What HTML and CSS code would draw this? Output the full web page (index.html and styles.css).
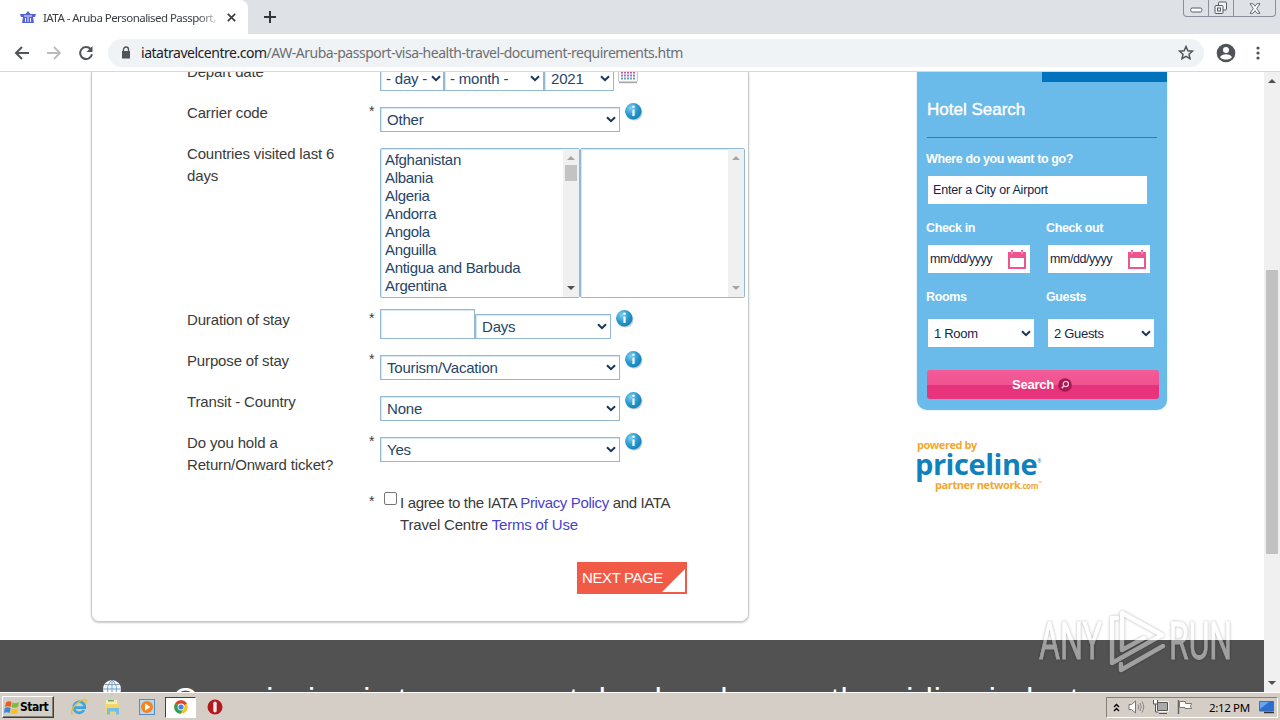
FILE: index.html
```
<!DOCTYPE html>
<html lang="en">
<head>
  <meta charset="utf-8">
  <title>IATA - Aruba Personalised Passport, Visa &amp; Health Requirements</title>
  <link rel="stylesheet" href="styles.css">
</head>
<body>
  <svg class="symbols" width="0" height="0">
    <defs>
      <radialGradient id="infoFill" cx="35%" cy="30%" r="75%">
        <stop offset="0" stop-color="#7fd0ee"/>
        <stop offset=".55" stop-color="#2a9ad0"/>
        <stop offset="1" stop-color="#0f7fb6"/>
      </radialGradient>
    </defs>
    <symbol id="chevron" viewBox="0 0 10 7"><path d="M1 1.2 5 5.2 9 1.2" fill="none" stroke="currentColor" stroke-width="2"/></symbol>
    <symbol id="info" viewBox="0 0 20 20">
      <circle cx="10.2" cy="10.4" r="8.2" fill="#c2cbd0"/>
      <circle cx="9.3" cy="9.3" r="8.2" fill="url(#infoFill)"/>
      <path d="M9.500 7.500v6.500" fill="none" stroke="#fff" stroke-width="2.200"/>
      <circle cx="9.500" cy="4.800" r="1.300" fill="#fff"/>
    </symbol>
    <symbol id="date" viewBox="0 0 18 19">
      <path d="M1 3h16v15H1z" fill="none" stroke="#ee5490" stroke-width="2"/>
      <path d="M0 2h18v6H0zM3 0h2v3H3zM13 0h2v3h-2z" fill="#ee5490"/>
      <path d="M4 1v3M14 1v3" stroke="#f9bdd4" stroke-width="1"/>
    </symbol>
  </svg>

  <div class="tabstrip">
    <div class="tab">
      <svg class="favicon" width="16" height="12" viewBox="0 0 16 12">
        <path d="M0 3h5.500L8 0l2.500 3H16l-1 3h-2l1 6H2l1-6H1z" fill="#5560dc"/>
        <path d="M4 5h8M5.500 7v4M8 6v5M10.500 7v4" stroke="#fff" stroke-width=".9"/>
      </svg>
      <span class="tab-title">IATA - Aruba Personalised Passport,</span>
      <svg class="tab-close" width="9" height="9" viewBox="0 0 9 9"><path d="M.8.8l7.4 7.4M8.2.8.8 8.2" stroke="#3c4043" stroke-width="1.7"/></svg>
    </div>
    <svg class="new-tab" width="12" height="12" viewBox="0 0 12 12"><path d="M6 0v12M0 6h12" stroke="#333639" stroke-width="2"/></svg>
    <div class="window-buttons">
      <div class="wb"><svg width="13" height="6" viewBox="0 0 13 6"><rect x=".8" y="1" width="11" height="4" rx="1.5" fill="#fff" stroke="#555c68"/></svg></div>
      <div class="wb"><svg width="14" height="14" viewBox="0 0 14 14"><g fill="#f4f5f7" stroke="#555c68"><rect x="4.500" y="1" width="8" height="8" rx="1"/><rect x="1" y="4.500" width="8" height="8" rx="1"/><rect x="3.500" y="7" width="3" height="3"/></g></svg></div>
      <div class="wb wide"><svg width="12" height="11" viewBox="0 0 12 11"><path d="M1 .7h3l2 2.500 2-2.500h3L7.700 5.500 11 10.300H8L6 7.700l-2 2.600H1l3.300-4.800z" fill="#fff" stroke="#555c68" stroke-width=".9"/></svg></div>
    </div>
  </div>

  <div class="toolbar">
    <svg width="16" height="14" viewBox="0 0 16 14"><path d="M15 7H2M8 1 2 7l6 6" fill="none" stroke="#505357" stroke-width="2"/></svg>
    <svg width="16" height="14" viewBox="0 0 16 14"><path d="M1 7h13M8 1l6 6-6 6" fill="none" stroke="#b9bbbd" stroke-width="1.800"/></svg>
    <svg width="16" height="16" viewBox="0 0 16 16"><path d="M12.600 4A6 6 0 1 0 14 9.300" fill="none" stroke="#505357" stroke-width="2"/><path d="M14.500 1v6h-6z" fill="#505357"/></svg>
    <div class="omnibox">
      <svg width="10" height="13" viewBox="0 0 10 13"><path d="M1 5h8v7.500H1z" fill="#505357"/><path d="M2.500 5.500V3.500a2.500 2.500 0 0 1 5 0v2" fill="none" stroke="#505357" stroke-width="1.400"/></svg>
      <span class="url"><b>iatatravelcentre.com</b>/AW-Aruba-passport-visa-health-travel-document-requirements.htm</span>
      <svg width="16" height="15" viewBox="0 0 16 15"><path d="M8 1.500l1.900 4.200 4.500.5-3.400 3 1 4.500L8 11.400l-4 2.300 1-4.500-3.400-3 4.500-.5z" fill="none" stroke="#505357" stroke-width="1.500"/></svg>
    </div>
    <svg width="20" height="20" viewBox="0 0 20 20"><circle cx="10" cy="10" r="9.300" fill="#505357"/><circle cx="10" cy="7" r="3" fill="#fff"/><path d="M4 14.200c1.500-4 10.500-4 12 0-2.500 3.200-9.500 3.200-12 0z" fill="#fff"/></svg>
    <svg class="menu-dots" width="4" height="14" viewBox="0 0 4 14" fill="#505357"><circle cx="2" cy="2" r="1.600"/><circle cx="2" cy="7" r="1.600"/><circle cx="2" cy="12" r="1.600"/></svg>
  </div>

  <div class="viewport">
    <div class="page">
      <div class="columns">
        <div class="form-card">
          <div class="row">
            <div class="label">Depart date</div><div class="req"></div>
            <div class="field">
              <div class="select day">- day -<svg><use href="#chevron"/></svg></div>
              <div class="select month">- month -<svg><use href="#chevron"/></svg></div>
              <div class="select year">2021<svg><use href="#chevron"/></svg></div>
              <svg class="cal" width="20" height="21" viewBox="0 0 20 21">
                <rect x=".5" y=".5" width="19" height="18.500" rx="2" fill="#fafafa" stroke="#c9c9c9"/>
                <path d="M1 19.500h18" stroke="#a9a9a9" stroke-width="1.500"/>
                <path d="M3 9.500h14" stroke="#c45aa6" stroke-width="2" stroke-dasharray="2 1"/>
                <path d="M3 12.500h14" stroke="#8f80c4" stroke-width="2" stroke-dasharray="2 1"/>
                <path d="M3 15.500h14" stroke="#6b9db8" stroke-width="2" stroke-dasharray="2 1"/>
              </svg>
            </div>
          </div>
          <div class="row">
            <div class="label">Carrier code</div><div class="req">*</div>
            <div class="field"><div class="select">Other<svg><use href="#chevron"/></svg></div><svg class="info"><use href="#info"/></svg></div>
          </div>
          <div class="row countries">
            <div class="label">Countries visited last 6 days</div><div class="req"></div>
            <div class="field">
              <div class="list">
                <ul>
                  <li>Afghanistan</li>
                  <li>Albania</li>
                  <li>Algeria</li>
                  <li>Andorra</li>
                  <li>Angola</li>
                  <li>Anguilla</li>
                  <li>Antigua and Barbuda</li>
                  <li>Argentina</li>
                </ul>
                <div class="list-scroll"><i class="up"></i><div class="list-thumb"></div><i class="down dark"></i></div>
              </div>
              <div class="list chosen">
                <ul></ul>
                <div class="list-scroll"><i class="up"></i><i class="down"></i></div>
              </div>
            </div>
          </div>
          <div class="row">
            <div class="label">Duration of stay</div><div class="req">*</div>
            <div class="field"><div class="input"></div><div class="select unit">Days<svg><use href="#chevron"/></svg></div><svg class="info"><use href="#info"/></svg></div>
          </div>
          <div class="row">
            <div class="label">Purpose of stay</div><div class="req">*</div>
            <div class="field"><div class="select">Tourism/Vacation<svg><use href="#chevron"/></svg></div><svg class="info"><use href="#info"/></svg></div>
          </div>
          <div class="row">
            <div class="label">Transit - Country</div><div class="req"></div>
            <div class="field"><div class="select">None<svg><use href="#chevron"/></svg></div><svg class="info"><use href="#info"/></svg></div>
          </div>
          <div class="row ticket">
            <div class="label">Do you hold a Return/Onward ticket?</div><div class="req">*</div>
            <div class="field"><div class="select">Yes<svg><use href="#chevron"/></svg></div><svg class="info"><use href="#info"/></svg></div>
          </div>
          <div class="row agree">
            <div class="label"></div><div class="req">*</div>
            <div class="field">
              <span class="checkbox"></span>
              <div class="terms">
                <p class="tight">I agree to the IATA <a>Privacy Policy</a> and IATA</p>
                <p>Travel Centre <a>Terms of Use</a></p>
              </div>
            </div>
          </div>
          <div class="next">NEXT PAGE<svg width="23" height="23" viewBox="0 0 23 23"><path d="M23 0v23H0z" fill="#fff"/></svg></div>
        </div>

        <div class="sidebar">
          <div class="hotel">
            <div class="hotel-tab"></div>
            <h2>Hotel Search</h2>
            <div class="caption">Where do you want to go?</div>
            <div class="box city">Enter a City or Airport</div>
            <div class="pair">
              <div>
                <div class="caption">Check in</div>
                <div class="box when">mm/dd/yyyy<svg width="18" height="19"><use href="#date"/></svg></div>
              </div>
              <div>
                <div class="caption">Check out</div>
                <div class="box when">mm/dd/yyyy<svg width="18" height="19"><use href="#date"/></svg></div>
              </div>
            </div>
            <div class="pair second">
              <div>
                <div class="caption">Rooms</div>
                <div class="box pick">1 Room<svg><use href="#chevron"/></svg></div>
              </div>
              <div>
                <div class="caption">Guests</div>
                <div class="box pick">2 Guests<svg><use href="#chevron"/></svg></div>
              </div>
            </div>
            <div class="search">Search
              <svg width="14" height="14" viewBox="0 0 14 14"><circle cx="7" cy="7" r="6.800" fill="#a8174f"/><circle cx="7.800" cy="6" r="2.600" fill="none" stroke="#fbc6da" stroke-width="1.300"/><path d="M5.900 8 3.700 10.300" stroke="#fbc6da" stroke-width="1.500"/></svg>
            </div>
          </div>
          <div class="priceline">
            <div class="powered">powered by</div>
            <div class="brand">priceline<sup>®</sup></div>
            <div class="partner">partner network<small>.com</small><sup>™</sup></div>
          </div>
        </div>
      </div>

      <div class="footer">
        <svg width="18" height="18" viewBox="0 0 18 18"><circle cx="9" cy="9" r="9" fill="#f4f8fb"/><path d="M9 0v18M0 9h18M2 4.500h14M2 13.500h14M9 0C3 5 3 13 9 18M9 0c6 5 6 13 0 18" fill="none" stroke="#7d9fc2"/></svg>
        <span class="mission">Our mission is to represent, lead and serve the airline industry</span>
      </div>
    </div>
    <div class="scrollbar"><i class="up"></i><div class="thumb"></div><i class="down"></i></div>
  </div>

  <div class="taskbar">
    <div class="start">
      <svg width="16" height="15" viewBox="0 0 16 15"><path d="M2 2.500q3-2 5.500-.5L6.700 7Q4 5.500 1 7z" fill="#ee5b23"/><path d="M8.500 2.500q3 1.500 6.500-.5l-1 5Q11 8.500 7.700 7.300z" fill="#7cbb3b"/><path d="M.8 8q3-1.500 5.800 0l-.9 5Q3 11.500 0 13z" fill="#3a87d8"/><path d="M7.600 8.500q3 1.300 6.300-.3l-1 5q-3 1.500-6.200 0z" fill="#fbc21f"/></svg>
      Start
    </div>
    <div class="quick">
      <svg width="18" height="18" viewBox="0 0 18 18"><path d="M14 12.200A5.600 5.600 0 1 1 14.800 9.600H5" fill="none" stroke="#3ba5e3" stroke-width="2.600"/><path d="M2.500 16.500C-1 14 6 3 14.500 1.500c2.500 0 2 2.500 1 4.200" fill="none" stroke="#e8bd3a" stroke-width="1.400"/></svg>
      <svg width="18" height="18" viewBox="0 0 18 18"><path d="M1 3h5l1 2h9v10H1z" fill="#f2d66b"/><path d="M2 2h11v4H2z" fill="#f8eeb4"/><path d="M4 2h6v1.500H4z" fill="#62b65b"/><path d="M3 16.500V10h12v6.500h-3v-3H6v3z" fill="#74bde8"/></svg>
      <svg width="18" height="18" viewBox="0 0 18 18"><rect x="1.500" y="1.500" width="15" height="15" fill="#b8d8f2" stroke="#4f8ec9"/><circle cx="9" cy="9" r="6" fill="#f5831f"/><path d="M7 5.500 12.500 9 7 12.500z" fill="#fff"/></svg>
      <div class="active"><svg width="14" height="14" viewBox="0 0 14 14"><circle cx="7" cy="7" r="6.800" fill="#f3c52e"/><path d="M7 7 1.100 3.600A6.800 6.800 0 0 1 12.900 3.600z" fill="#da4437"/><path d="M7 7 1.100 3.600A6.800 6.800 0 0 0 6.600 13.800L9.500 8.500z" fill="#2f9e58"/><circle cx="7" cy="7" r="3.400" fill="#fff"/><circle cx="7" cy="7" r="2.600" fill="#4a80e8"/></svg></div>
      <svg width="16" height="16" viewBox="0 0 16 16"><circle cx="8" cy="8" r="7.500" fill="#b3191c"/><rect x="6.300" y="2.500" width="3.400" height="11" rx="1.700" fill="#f7e9e9"/></svg>
    </div>
    <div class="tray">
      <svg width="7" height="9" viewBox="0 0 7 9"><path d="M1 4l2.500-2.500L6 4M1 8l2.500-2.500L6 8" fill="none" stroke="#000" stroke-width="1.400"/></svg>
      <svg class="sound" width="17" height="14" viewBox="0 0 17 14"><path d="M1 4.500h2.500L7.500 1v12l-4-3.500H1z" fill="#fff" stroke="#777"/><path d="M10 4.500q1.500 2.500 0 5M12 3q2.500 4 0 8M14 1.500q3.500 5.500 0 11" fill="none" stroke="#888"/></svg>
      <svg class="net" width="17" height="16" viewBox="0 0 17 16"><path d="M5.500 3.500h10v8h-10z" fill="#aaa" stroke="#fff" stroke-width="2.500"/><path d="M5.500 3.500h10v8h-10z" fill="#aaa" stroke="#555"/><path d="M1 1h5v4H1z" fill="#fff"/><path d="M7 14.500h8M1.500 1v4h4V1M3.500 5v8h3" fill="none" stroke="#555"/></svg>
      <svg class="flag" width="17" height="16" viewBox="0 0 17 16"><path d="M2.500 1v14" stroke="#666" stroke-width="1.500"/><path d="M3.500 2.500h6v2h6q-2 3 0 5H9v-1H3.500z" fill="#fff" stroke="#777"/></svg>
      <span class="clock">2:12 PM</span>
      <svg class="desk" width="15" height="13" viewBox="0 0 15 13"><path d="M.5.500h14v9.500H.500z" fill="#2b6ed0" stroke="#3a71b8"/><path d="M1 1h9L1 8z" fill="#6ba5ec"/><path d="M5 11.500h10" stroke="#333" stroke-width="1.500"/></svg>
    </div>
  </div>

  <svg class="watermark" width="200" height="66" viewBox="0 0 200 66">
    <g class="mark">
      <text x="1" y="50" textLength="63" lengthAdjust="spacingAndGlyphs">ANY</text>
      <text x="131" y="50" textLength="63" lengthAdjust="spacingAndGlyphs">RUN</text>
      <path d="M79 9h-5v45L124 26 84 4v37l22-12M83 55v6L125 37"/>
    </g>
  </svg>
</body>
</html>
```
FILE: styles.css
```
* {
  box-sizing: border-box;
}
body {
  margin: 0;
  width: 1280px;
  height: 720px;
  overflow: hidden;
  display: flex;
  flex-direction: column;
  background: #fff;
  font-family: "Liberation Sans", Arial, sans-serif;
  color: #3a3a3a;
}
svg {
  display: block;
  flex: none;
}
.symbols {
  position: absolute;
}

/* browser frame */
.tabstrip {
  flex: none;
  height: 34px;
  display: flex;
  background: #dee1e6;
}
.tab {
  width: 248px;
  display: flex;
  align-items: center;
  padding-left: 20px;
  background: #fff;
  border-radius: 0 8px 0 0;
}
.tab-title {
  width: 176px;
  margin-left: 7px;
  overflow: hidden;
  white-space: nowrap;
  font: 11.5px "Noto Sans", sans-serif;
  letter-spacing: -0.54px;
  color: #3c4043;
  -webkit-mask-image: linear-gradient(to right, #000 155px, transparent 180px);
}
.tab-close {
  margin-left: 8px;
}
.new-tab {
  margin: 11px 0 0 16px;
}
.window-buttons {
  display: flex;
  height: 17px;
  margin-left: auto;
  margin-right: 4px;
  border: 1px solid #8b919c;
  border-top: 0;
  border-radius: 0 0 4px 4px;
}
.wb {
  width: 25px;
  display: flex;
  align-items: center;
  justify-content: center;
  border-right: 1px solid #8b919c;
}
.wb:first-child {
  align-items: flex-end;
  padding-bottom: 3px;
}
.wb.wide {
  width: 41px;
  border-right: 0;
}
.toolbar {
  flex: none;
  height: 38px;
  display: flex;
  align-items: center;
  gap: 16px;
  padding: 0 14px;
  border-bottom: 1px solid #d5d9dc;
}
.omnibox {
  width: 1096px;
  height: 28px;
  display: flex;
  align-items: center;
  margin-left: -2px;
  padding: 0 10px 0 13px;
  border-radius: 14px;
  background: #f0f3f5;
}
.url {
  flex: 1;
  margin-left: 10px;
  font: 14px "Noto Sans", sans-serif;
  letter-spacing: -0.48px;
  color: #6b6f73;
}
.url b {
  font-weight: normal;
  color: #202124;
}
.toolbar .menu-dots {
  margin-left: 4px;
}
.omnibox + svg {
  margin-left: -4px;
}

/* page */
.viewport {
  flex: 1;
  min-height: 0;
  display: flex;
}
.page {
  width: 1264px;
  overflow: hidden;
}
.columns {
  height: 568px;
  display: flex;
}
.form-card {
  width: 658px;
  height: 550px;
  margin-left: 91px;
  padding-left: 95px;
  border: 1px solid #c4c8c8;
  border-top: 0;
  border-radius: 0 0 8px 8px;
  box-shadow: 0 1px 2px #ccc;
}
.row {
  height: 41px;
  display: flex;
  font-size: 15px;
  line-height: 22px;
}
.row:first-child {
  margin-top: -11px;
  clip-path: inset(11px 0 0 0);
}
.row.countries {
  height: 166px;
}
.row.ticket {
  height: 60px;
}
.row.agree {
  height: 70px;
}
.label {
  width: 182px;
  padding-right: 20px;
  letter-spacing: -0.15px;
}
.req {
  width: 11px;
  line-height: 18px;
  font-size: 14px;
}
.field {
  display: flex;
  align-items: flex-start;
}
.select {
  width: 240px;
  height: 25px;
  display: flex;
  align-items: center;
  justify-content: space-between;
  margin-top: 5px;
  padding: 0 3px 0 6px;
  border: 1px solid #93b9d2;
  box-shadow: inset 1px 1px 1px #d5e7f3;
  color: #264568;
  letter-spacing: -0.2px;
  white-space: nowrap;
}
.select svg, .pick svg {
  width: 10px;
  height: 7px;
  color: #17365a;
}
.select.day {
  width: 64px;
  padding: 0 2px 0 5px;
}
.select.month {
  width: 100px;
  padding-left: 5px;
}
.select.year {
  width: 70px;
}
.select.unit {
  width: 136px;
}
.input {
  width: 95px;
  height: 30px;
  border: 1px solid #93b9d2;
  box-shadow: inset 1px 1px 1px #d5e7f3;
}
.cal {
  margin: 2px 0 0 4px;
}
.info {
  width: 20px;
  height: 20px;
  margin-left: 4px;
}
.list {
  width: 200px;
  height: 150px;
  display: flex;
  margin-top: 5px;
  border: 1px solid #8fb9d6;
  border-radius: 2px;
  box-shadow: inset 1px 1px 1px #d5e7f3;
}
.list.chosen {
  width: 165px;
}
.list ul {
  flex: 1;
  margin: 0;
  padding: 2px 0 0 4px;
  list-style: none;
  line-height: 18px;
  color: #264568;
  letter-spacing: -0.3px;
  white-space: nowrap;
}
.list-scroll, .scrollbar {
  width: 16px;
  display: flex;
  flex-direction: column;
  align-items: center;
  background: #f0f0f0;
}
.list-scroll {
  padding: 7px 0;
}
.up, .down {
  border: 4px solid transparent;
  border-top: 0;
  border-bottom: 4px solid #a6a6a6;
}
.down {
  margin-top: auto;
  transform: rotate(180deg);
}
.down.dark, .scrollbar i {
  border-bottom-color: #505050;
}
.list-thumb {
  width: 12px;
  height: 16px;
  margin-top: 5px;
  background: #c3c3c3;
}
.checkbox {
  width: 13px;
  height: 13px;
  margin-left: 4px;
  border: 1px solid #767676;
  border-radius: 2px;
}
.terms {
  margin-left: 3px;
}
.terms p {
  margin: 0;
  letter-spacing: -0.18px;
}
.terms .tight {
  letter-spacing: -0.34px;
}
.terms a {
  color: #4a3fcc;
}
.next {
  width: 110px;
  height: 32px;
  display: flex;
  align-items: center;
  justify-content: space-between;
  margin-left: 390px;
  padding: 0 2px 1px 5px;
  background: #f05a47;
  color: #fff;
  font-size: 15px;
  letter-spacing: -0.4px;
  white-space: nowrap;
}
.next svg {
  margin: 6px 0 0 -4px;
}

/* hotel search */
.sidebar {
  width: 250px;
  margin-left: 168px;
}
.hotel {
  height: 338px;
  padding: 0 8px 0 9px;
  border-radius: 0 0 10px 10px;
  background: #6abaea;
  box-shadow: 0 0 2px #b5d9ee;
  color: #fff;
}
.hotel-tab {
  height: 10px;
  margin: 0 -8px 0 116px;
  background: #0073bc;
}
.hotel h2 {
  width: 230px;
  height: 56px;
  margin: 0 0 0 1px;
  border-bottom: 1px solid #2581b5;
  font-size: 17px;
  font-weight: normal;
  line-height: 55px;
  -webkit-text-stroke: 0.4px #fff;
}
.caption {
  height: 28px;
  padding-top: 7px;
  font-size: 12.5px;
  line-height: 28px;
  font-weight: bold;
  letter-spacing: -0.38px;
  white-space: nowrap;
}
.hotel h2 + .caption {
  height: 38px;
}
.box {
  height: 28px;
  display: flex;
  align-items: center;
  margin-left: 2px;
  background: #fff;
  color: #12264a;
  font-size: 12.5px;
  letter-spacing: -0.3px;
}
.city {
  width: 219px;
  padding-left: 5px;
  letter-spacing: -0.2px;
}
.pair {
  display: flex;
  gap: 18px;
}
.pair .caption {
  height: 41px;
  padding-top: 10px;
}
.when {
  width: 102px;
  justify-content: space-between;
  padding: 0 4px 0 2px;
  letter-spacing: -0.45px;
}
.pair > div {
  width: 102px;
}
.pair.second .caption {
  height: 46px;
}
.pick {
  width: 106px;
  justify-content: space-between;
  padding: 0 3px 0 6px;
  font-size: 13px;
}
.search {
  width: 232px;
  height: 29px;
  display: flex;
  align-items: center;
  justify-content: center;
  gap: 4px;
  margin: 23px 0 0 1px;
  padding-right: 2px;
  border-radius: 3px;
  background: linear-gradient(#f25c99 0, #f0528f 50%, #e6317b 51%, #e8357d 100%);
  font-size: 13px;
  font-weight: bold;
  letter-spacing: -0.2px;
}
.search svg {
  margin-top: 1px;
}
.priceline {
  padding-top: 28px;
  font-family: "Open Sans", sans-serif;
  font-weight: bold;
  white-space: nowrap;
}
.powered, .partner {
  height: 13px;
  color: #f3a82f;
  font-size: 11px;
  line-height: 13px;
  letter-spacing: -0.45px;
}
.brand {
  height: 27px;
  margin-left: -2px;
  color: #0f82bd;
  font-size: 29px;
  line-height: 25px;
  letter-spacing: -0.45px;
}
.partner {
  padding-left: 18px;
  letter-spacing: -0.4px;
}
.partner small {
  font-size: 8px;
}
.priceline sup {
  font-size: 5px;
  line-height: 0;
  font-weight: normal;
  vertical-align: 4px;
}
.priceline .brand sup {
  vertical-align: 12px;
}

.footer {
  height: 52px;
  display: flex;
  padding: 40px 0 0 103px;
  overflow: hidden;
  background: #525252;
}
.mission {
  margin: -1px 0 -20px 52px;
  color: #fff;
  font-size: 32px;
  line-height: 40px;
  letter-spacing: 0.88px;
  white-space: nowrap;
}
.scrollbar {
  padding: 7px 0;
}
.thumb {
  width: 12px;
  height: 284px;
  margin-top: 187px;
  background: #c1c1c1;
}

/* taskbar */
.taskbar {
  flex: none;
  height: 28px;
  display: flex;
  align-items: center;
  padding: 1px 0 0 2px;
  border-top: 1px solid #fff;
  background: #d5cec6;
}
.start {
  width: 52px;
  height: 22px;
  display: flex;
  align-items: center;
  padding-left: 1px;
  border: 1px solid #fff;
  border-right: 1px solid #404040;
  border-bottom: 1px solid #404040;
  box-shadow: inset -1px -1px #848078;
  color: #000;
  font: bold 12px "DejaVu Sans Condensed", "DejaVu Sans", sans-serif;
  letter-spacing: -0.5px;
}
.quick {
  display: flex;
  align-items: center;
  gap: 16px;
  margin-left: 16px;
}
.active {
  width: 31px;
  height: 21px;
  display: flex;
  align-items: center;
  justify-content: center;
  margin: 0 -5px 0 -7px;
  border: 1px solid #fff;
  border-top: 1px solid #404040;
  border-left: 1px solid #404040;
  background: #fff;
}
.tray {
  width: 172px;
  height: 21px;
  display: flex;
  align-items: center;
  margin-left: auto;
  margin-right: 2px;
  padding-left: 6px;
  border: 1px solid #fff;
  border-top-color: #848078;
  border-left-color: #848078;
}
.sound {
  margin-left: 8px;
}
.net {
  margin-left: 7px;
}
.flag {
  margin-left: 7px;
}
.clock {
  margin-left: 16px;
  color: #000;
  font: 11.5px "Noto Sans", sans-serif;
  letter-spacing: -0.35px;
  white-space: nowrap;
}
.desk {
  margin-left: auto;
  margin-right: 3px;
}

/* overlay logo on top of the whole screen */
.watermark {
  position: absolute;
  left: 1038px;
  top: 609px;
}
.mark {
  opacity: 0.45;
  filter: drop-shadow(0 0 1.5px rgba(0, 0, 0, 0.65));
}
.mark text {
  fill: #fff;
  stroke: #fff;
  stroke-width: 0.8;
  font: 52px Roboto, sans-serif;
}
.mark path {
  fill: none;
  stroke: #fff;
  stroke-width: 4.5;
  stroke-linejoin: round;
  stroke-linecap: round;
}
```
